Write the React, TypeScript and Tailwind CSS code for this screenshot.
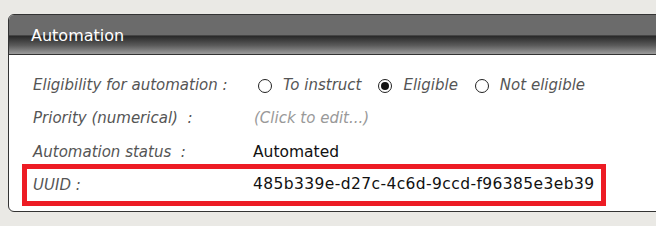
const font = { fontFamily: '"DejaVu Sans", Verdana, sans-serif' };

function Radio({ checked, label }: { checked?: boolean; label: string }) {
  return (
    <span className="inline-flex items-center gap-[11px] mr-[17px]">
      <span className="flex h-[14px] w-[14px] items-center justify-center rounded-full border border-[#222] bg-white">
        {checked && <span className="h-[8px] w-[8px] rounded-full bg-[#111]" />}
      </span>
      <span className="italic text-[#555]">{label}</span>
    </span>
  );
}

export default function App() {
  return (
    <div className="h-[226px] w-[656px] overflow-hidden bg-[#eae9e5] pt-[14px] pl-[8px]" style={font}>
      <div className="w-[670px] overflow-hidden rounded-t-[6px] rounded-bl-[6px] border border-[#333] bg-white">
        {/* Header */}
        <div className="h-[40px] border-b border-[#333] bg-[linear-gradient(to_bottom,#6b6b6b_0%,#6b6b6b_52%,#262626_53%,#5a5a5a_78%,#9c9c9c_100%)] pl-[22px] pt-[10px] text-[16px] leading-[22px] text-white">
          Automation
        </div>

        {/* Body */}
        <div className="px-[13px] pt-[14px] pb-[5px] text-[15px]">
          <div className="flex h-[33px] items-center pl-[11px]">
            <div className="w-[220px] italic text-[#555]">Eligibility for automation :</div>
            <div className="flex items-center pl-[5px]">
              <Radio label="To instruct" />
              <Radio checked label="Eligible" />
              <Radio label="Not eligible" />
            </div>
          </div>
          <div className="flex h-[33px] items-center pl-[11px]">
            <div className="w-[220px] italic text-[#555] whitespace-pre">Priority (numerical)  :</div>
            <div className="italic text-[#999] pl-[1px]">(Click to edit...)</div>
          </div>
          <div className="flex h-[29px] items-start pt-[9px] pl-[11px] leading-[17px]">
            <div className="w-[220px] italic text-[#555] whitespace-pre">Automation status  :</div>
            <div className="text-[15.5px] text-[#111]">Automated</div>
          </div>
          <div className="flex h-[42px] w-[584px] items-center border-[5px] border-[#ed1c24] pl-[6px]">
            <div className="w-[220px] italic text-[#555]">UUID :</div>
            <div className="text-[15.5px] tracking-[0.4px] text-[#111]">485b339e-d27c-4c6d-9ccd-f96385e3eb39</div>
          </div>
        </div>
      </div>
    </div>
  );
}
